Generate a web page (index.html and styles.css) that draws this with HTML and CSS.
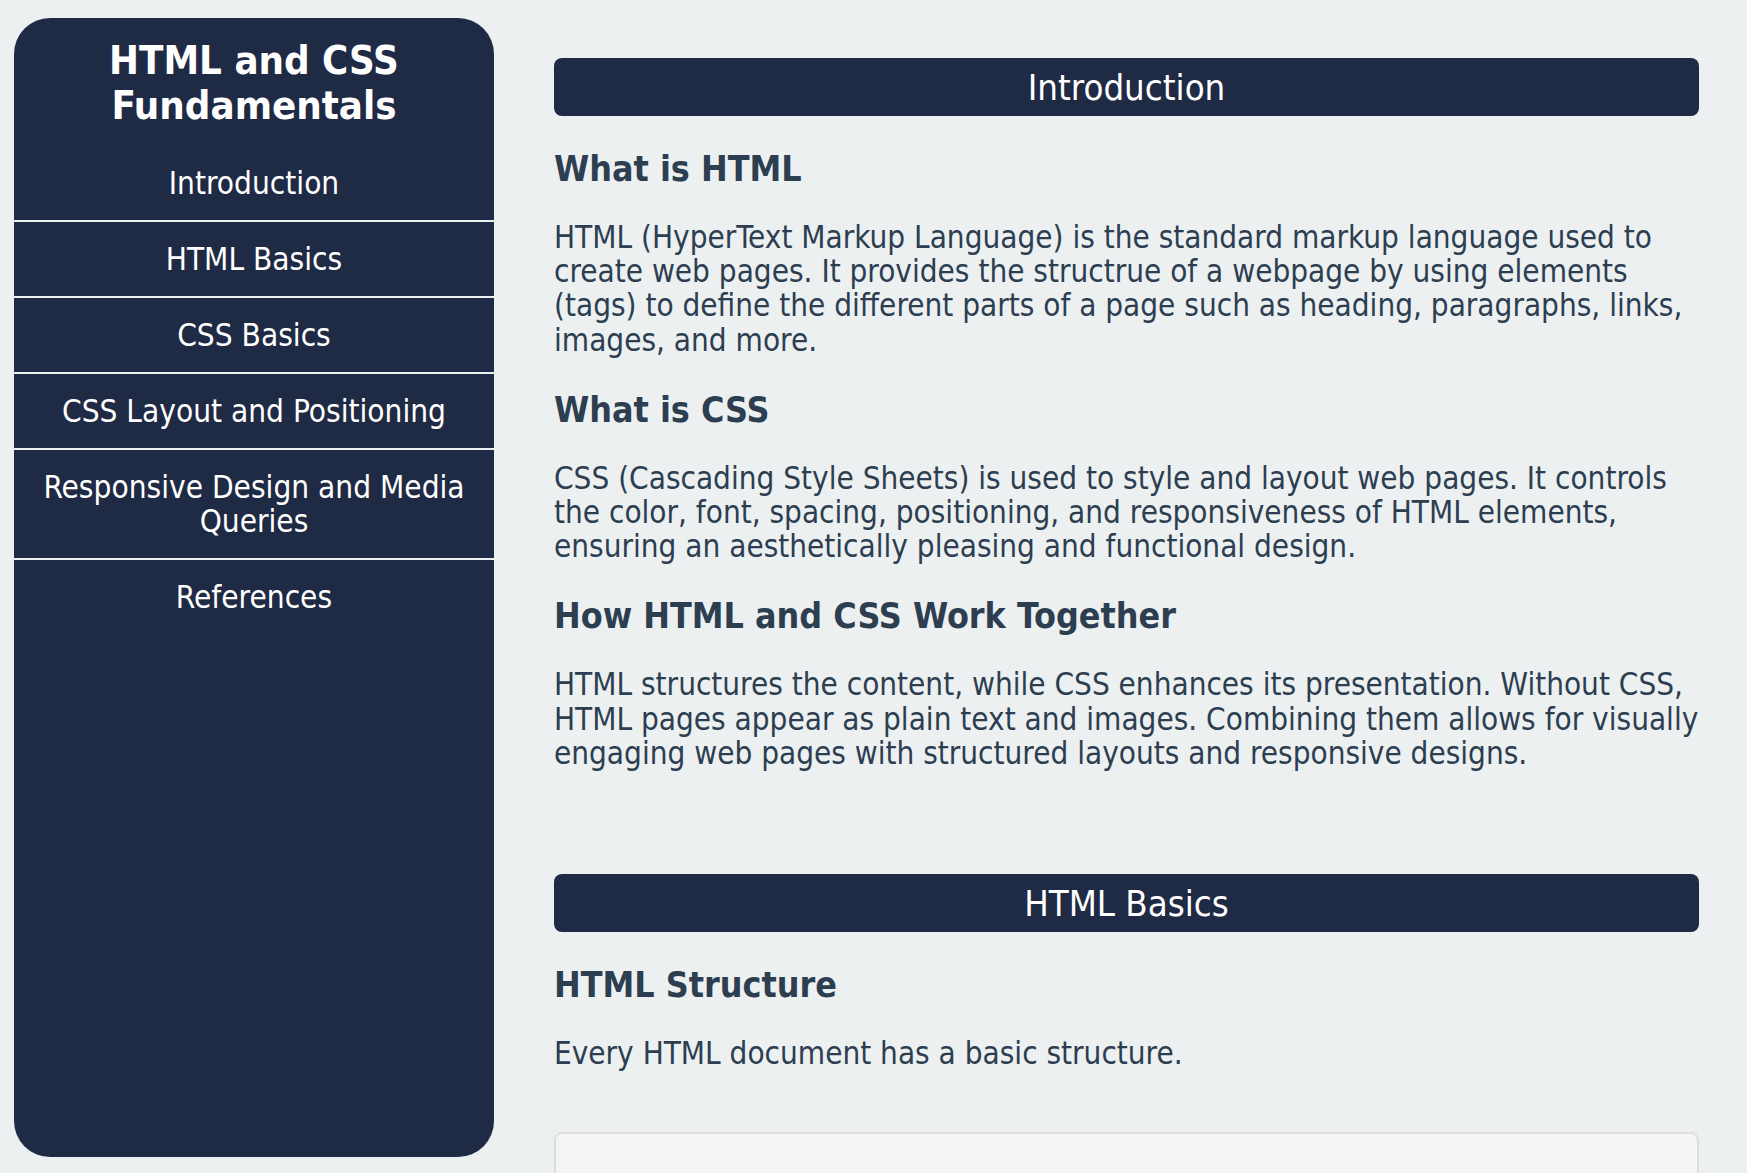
FILE: index.html
```html
<!DOCTYPE html>
<html lang="en">
<head>
<meta charset="utf-8">
<title>HTML and CSS Fundamentals</title>
<link rel="stylesheet" href="styles.css">
</head>
<body>
<aside class="sidebar">
  <h1 class="site-title">HTML and CSS Fundamentals</h1>
  <nav class="nav">
    <a class="nav-item" href="#intro">Introduction</a>
    <a class="nav-item" href="#html">HTML Basics</a>
    <a class="nav-item" href="#css">CSS Basics</a>
    <a class="nav-item" href="#layout">CSS Layout and Positioning</a>
    <a class="nav-item" href="#responsive">Responsive Design and Media Queries</a>
    <a class="nav-item" href="#refs">References</a>
  </nav>
</aside>
<main class="content">
  <section class="section" id="intro">
    <h2 class="section-title">Introduction</h2>
    <h3 class="sub">What is HTML</h3>
    <p class="text">HTML (HyperText Markup Language) is the standard markup language used to create web pages. It provides the structrue of a webpage by using elements (tags) to define the different parts of a page such as heading, paragraphs, links, images, and more.</p>
    <h3 class="sub">What is CSS</h3>
    <p class="text">CSS (Cascading Style Sheets) is used to style and layout web pages. It controls the color, font, spacing, positioning, and responsiveness of HTML elements, ensuring an aesthetically pleasing and functional design.</p>
    <h3 class="sub">How HTML and CSS Work Together</h3>
    <p class="text">HTML structures the content, while CSS enhances its presentation. Without CSS, HTML pages appear as plain text and images. Combining them allows for visually engaging web pages with structured layouts and responsive designs.</p>
  </section>
  <section class="section" id="html">
    <h2 class="section-title">HTML Basics</h2>
    <h3 class="sub">HTML Structure</h3>
    <p class="text">Every HTML document has a basic structure.</p>
    <pre class="code">&lt;!DOCTYPE html&gt;
&lt;html&gt;
&lt;head&gt;
  &lt;title&gt;Page Title&lt;/title&gt;
&lt;/head&gt;</pre>
  </section>
</main>
</body>
</html>
```
FILE: styles.css
```css
* { box-sizing: border-box; }
html, body { height: 100%; }
body {
  margin: 0;
  background: #ecf0f1;
  font-family: "DejaVu Sans Condensed", Tahoma, "DejaVu Sans", sans-serif;
  color: #2c3e50;
  display: flex;
  align-items: flex-start;
  overflow: hidden;
}
.sidebar {
  flex: 0 0 480px;
  width: 480px;
  height: 1139px;
  margin: 18px 0 0 14px;
  background: #1f2a44;
  border-radius: 36px;
  color: #fff;
  padding-top: 20px;
}
.site-title {
  margin: 0 0 19px;
  font-size: 39.8px;
  line-height: 44.6px;
  font-weight: bold;
  text-align: center;
  padding: 0 30px;
}
.nav { display: flex; flex-direction: column; }
.nav-item {
  display: block;
  color: #fff;
  text-decoration: none;
  text-align: center;
  font-size: 31.3px;
  line-height: 34px;
  padding: 20px 12px;
  border-bottom: 2px solid #ecf0f1;
}
.nav-item:last-child { border-bottom: none; }
.content {
  flex: 0 0 1145px;
  margin-left: 60px;
  padding-top: 58px;
}
.section { margin-bottom: 104px; }
.section-title {
  margin: 0;
  background: #1f2a44;
  color: #fff;
  border-radius: 8px;
  height: 58px;
  font-size: 36.3px;
  font-weight: normal;
  line-height: 59px;
  text-align: center;
}
.sub {
  margin: 32px 0 0;
  font-size: 35.5px;
  line-height: 42px;
  font-weight: bold;
}
.text {
  margin: 30px 0 0;
  font-size: 31.2px;
  line-height: 34.2px;
}
.code {
  margin: 62px 0 0;
  background: #f4f4f4;
  border: 2px solid #dedede;
  border-radius: 8px;
  padding: 44px 30px;
  font-family: "Liberation Mono", monospace;
  font-size: 26px;
  line-height: 34px;
  color: #2c3e50;
}
```
